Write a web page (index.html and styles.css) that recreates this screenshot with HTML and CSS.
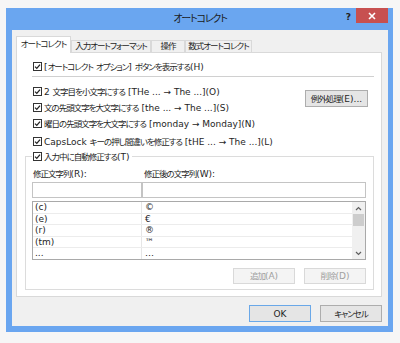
FILE: index.html
```html
<!DOCTYPE html>
<html lang="ja">
<head>
    <meta charset="UTF-8">
    <title>オートコレクト</title>
    <link rel="stylesheet" href="styles.css">
</head>
<body>
    <div class="window">
        <div class="titlebar">
            <span class="title">オートコレクト</span>
            <div class="controls">
                <span class="help">?</span>
                <span class="close">
                    <svg width="8" height="8" viewBox="0 0 8 8"><path d="M1 1 L7 7 M7 1 L1 7" stroke="#fff" stroke-width="1.6"/></svg>
                </span>
            </div>
        </div>
        <div class="client">
            <div class="tabs">
                <div class="tab active">オートコレクト</div>
                <div class="tab w-format">入力オートフォーマット</div>
                <div class="tab w-action">操作</div>
                <div class="tab w-math">数式オートコレクト</div>
            </div>
            <div class="panel">
                <label class="check first">
                    <svg class="box" width="9" height="9" viewBox="0 0 9 9"><rect x="0.5" y="0.5" width="8" height="8" fill="#fff" stroke="#333"/><path d="M2 4.6 L3.8 6.4 L7 2.6" fill="none" stroke="#222" stroke-width="1.3"/></svg>
                    <span>[<span class="j">オートコレクト</span> <span class="j">オプション</span>] <span class="j">ボタンを表示する</span>(H)</span>
                </label>
                <div class="rule"></div>
                <div class="options">
                    <div class="opt-list">
                        <label class="check">
                            <svg class="box" width="9" height="9" viewBox="0 0 9 9"><rect x="0.5" y="0.5" width="8" height="8" fill="#fff" stroke="#333"/><path d="M2 4.6 L3.8 6.4 L7 2.6" fill="none" stroke="#222" stroke-width="1.3"/></svg>
                            <span>2 <span class="j">文字目を小文字にする</span> [THe ... → The ...](O)</span>
                        </label>
                        <label class="check">
                            <svg class="box" width="9" height="9" viewBox="0 0 9 9"><rect x="0.5" y="0.5" width="8" height="8" fill="#fff" stroke="#333"/><path d="M2 4.6 L3.8 6.4 L7 2.6" fill="none" stroke="#222" stroke-width="1.3"/></svg>
                            <span><span class="j">文の先頭文字を大文字にする</span> [the ... → The ...](S)</span>
                        </label>
                        <label class="check">
                            <svg class="box" width="9" height="9" viewBox="0 0 9 9"><rect x="0.5" y="0.5" width="8" height="8" fill="#fff" stroke="#333"/><path d="M2 4.6 L3.8 6.4 L7 2.6" fill="none" stroke="#222" stroke-width="1.3"/></svg>
                            <span><span class="j">曜日の先頭文字を大文字にする</span> [monday → Monday](N)</span>
                        </label>
                        <label class="check caps">
                            <svg class="box" width="9" height="9" viewBox="0 0 9 9"><rect x="0.5" y="0.5" width="8" height="8" fill="#fff" stroke="#333"/><path d="M2 4.6 L3.8 6.4 L7 2.6" fill="none" stroke="#222" stroke-width="1.3"/></svg>
                            <span>CapsLock <span class="j">キーの押し間違いを修正する</span> [tHE ... → The ...](L)</span>
                        </label>
                    </div>
                    <button class="btn exc"><span class="j">例外処理</span>(E)...</button>
                </div>
                <fieldset class="group">
                    <legend class="check">
                        <svg class="box" width="9" height="9" viewBox="0 0 9 9"><rect x="0.5" y="0.5" width="8" height="8" fill="#fff" stroke="#333"/><path d="M2 4.6 L3.8 6.4 L7 2.6" fill="none" stroke="#222" stroke-width="1.3"/></svg>
                        <span><span class="j">入力中に自動修正する</span>(T)</span>
                    </legend>
                    <div class="fields">
                        <div class="lbl"><span class="j">修正文字列</span>(R):</div>
                        <div class="lbl lbl-r"><span class="j">修正後の文字列</span>(W):</div>
                        <div class="input"></div>
                        <div class="input"></div>
                    </div>
                    <div class="list">
                        <div class="rows">
                            <div class="row"><span class="c1">(c)</span><span class="c2">©</span></div>
                            <div class="row"><span class="c1">(e)</span><span class="c2">€</span></div>
                            <div class="row"><span class="c1">(r)</span><span class="c2">®</span></div>
                            <div class="row"><span class="c1">(tm)</span><span class="c2">™</span></div>
                            <div class="row"><span class="c1">...</span><span class="c2">…</span></div>
                        </div>
                        <div class="scrollbar">
                            <svg width="7" height="5" viewBox="0 0 7 5"><path d="M1 4 L3.5 1.5 L6 4" fill="none" stroke="#606060" stroke-width="1.2"/></svg>
                            <div class="track"><div class="thumb"></div></div>
                            <svg width="7" height="5" viewBox="0 0 7 5"><path d="M1 1 L3.5 3.5 L6 1" fill="none" stroke="#606060" stroke-width="1.2"/></svg>
                        </div>
                    </div>
                    <div class="list-btns">
                        <button class="btn disabled"><span class="j">追加</span>(A)</button>
                        <button class="btn disabled"><span class="j">削除</span>(D)</button>
                    </div>
                </fieldset>
            </div>
            <div class="footer">
                <button class="btn ok">OK</button>
                <button class="btn"><span class="j">キャンセル</span></button>
            </div>
        </div>
    </div>
</body>
</html>
```

FILE: styles.css
```css
* {
    box-sizing: border-box;
}
body {
    margin: 0;
    background: #f6f6f6;
    font-family: "DejaVu Sans", "Noto Sans CJK JP", sans-serif;
    font-size: 9px;
    color: #1e1e1e;
    font-feature-settings: "palt";
}
/* japanese runs: narrower, like Meiryo UI */
.j {
    font-size: 8.5px;
    letter-spacing: -1px;
}
.window {
    margin: 8px 0 0 6px;
    width: 387px;
    height: 324px;
    background: #6aa6f0;
    padding: 0 5px 6px 6px;
    display: flex;
    flex-direction: column;
}
.titlebar {
    height: 22px;
    display: grid;
    grid-template-columns: 1fr auto 1fr;
    align-items: start;
}
.title {
    grid-column: 2;
    font-size: 10px;
    letter-spacing: -1.2px;
    line-height: 22px;
    color: #1a1a1a;
}
.controls {
    grid-column: 3;
    justify-self: end;
    display: flex;
    align-items: flex-start;
}
.help {
    font-weight: bold;
    font-size: 9px;
    line-height: 12px;
    margin: 3px 5px 0 0;
    color: #222;
}
.close {
    width: 32px;
    height: 15px;
    background: #c75050;
    display: flex;
    align-items: center;
    justify-content: center;
}
.client {
    flex: 1;
    background: #f0f0f0;
    padding: 6px 6px 4px 4px;
    display: flex;
    flex-direction: column;
}
.tabs {
    display: flex;
    align-items: flex-end;
    height: 17px;
    margin-bottom: -1px;
    position: relative;
    z-index: 1;
}
.tab {
    height: 12px;
    margin-bottom: 1px;
    border: 1px solid #d9d9d9;
    border-bottom: none;
    background: #f0f0f0;
    text-align: center;
    font-size: 8.5px;
    letter-spacing: -1px;
    line-height: 11px;
    white-space: nowrap;
}
.tab.active {
    width: 55px;
    height: 17px;
    margin-bottom: 0;
    background: #fff;
    line-height: 14px;
}
.w-format { width: 80px; }
.w-action { width: 34px; }
.w-math { width: 67px; }
.panel {
    flex: 1;
    background: #fff;
    border: 1px solid #d9d9d9;
    padding: 0 7px 0 8px;
    display: flex;
    flex-direction: column;
}
.check {
    display: flex;
    align-items: center;
    height: 16px;
    white-space: nowrap;
}
.box {
    flex: none;
    margin-right: 2px;
}
.first {
    margin: 5px 0 0 8px;
}
.rule {
    height: 1px;
    background: #d0d0d0;
    margin: 2px 0 0 7px;
}
.options {
    display: flex;
    justify-content: space-between;
    align-items: flex-start;
    margin-top: 6px;
}
.opt-list {
    padding-left: 8px;
}
.caps {
    margin-top: 2px;
}
.btn {
    font: inherit;
    color: #1e1e1e;
    background: #e5e5e5;
    border: 1px solid #adadad;
    height: 17px;
    width: 62px;
    padding: 0;
    line-height: 14px;
}
.exc {
    width: 63px;
    margin: 7px 6px 0 0;
}
.group {
    margin: 0;
    border: 1px solid #dcdcdc;
    padding: 0 7px 5px 6px;
}
.group legend {
    padding: 0 2px 0 1px;
    height: 14px;
}
.fields {
    display: grid;
    grid-template-columns: 110px 1fr;
    margin-top: 5px;
}
.lbl {
    line-height: 12px;
    padding-left: 1px;
    margin-bottom: 2px;
}
.lbl-r {
    padding-left: 2px;
}
.input {
    height: 16px;
    border: 1px solid #c4c4c4;
    background: #fff;
}
.list {
    margin-top: 3px;
    height: 59px;
    border: 1px solid #a9a9a9;
    display: flex;
}
.rows {
    flex: 1;
    display: flex;
    flex-direction: column;
}
.row {
    flex: 1;
    display: flex;
    border-bottom: 1px solid #ececec;
    line-height: 10px;
}
.row:last-child {
    border-bottom: none;
}
.c1 {
    width: 109px;
    padding-left: 2px;
    border-right: 1px solid #e6e6e6;
}
.c2 {
    padding-left: 3px;
}
.scrollbar {
    width: 13px;
    background: #f0f0f0;
    display: flex;
    flex-direction: column;
    align-items: center;
    padding: 4px 0 3px;
    gap: 3px;
}
.track {
    flex: 1;
    width: 100%;
}
.thumb {
    height: 12px;
    margin: 0 1px;
    background: #cdcdcd;
}
.list-btns {
    display: flex;
    justify-content: flex-end;
    gap: 9px;
    margin-top: 8px;
}
.btn.disabled {
    background: #f4f4f4;
    border-color: #d9d9d9;
    color: #a0a0a0;
    height: 16px;
}
.footer {
    display: flex;
    justify-content: flex-end;
    gap: 9px;
    margin-top: 8px;
}
.btn.ok {
    border-color: #6aa8e8;
}
```
